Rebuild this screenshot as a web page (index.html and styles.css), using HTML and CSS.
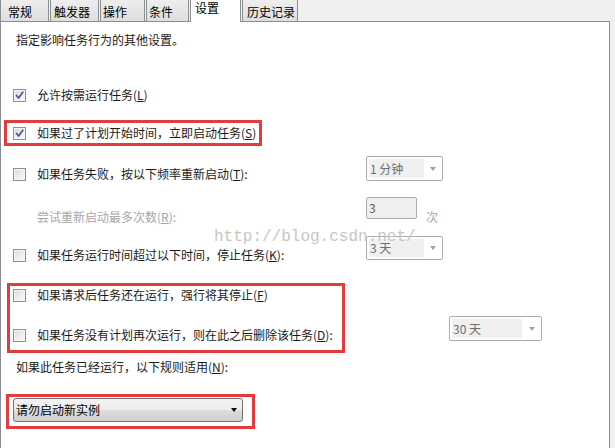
FILE: index.html
```html
<!DOCTYPE html>
<html lang="zh-CN">
<head>
<meta charset="utf-8">
<title>设置</title>
<link rel="stylesheet" href="styles.css">
</head>
<body>
<div class="tabs">
  <div class="tab t1">常规</div>
  <div class="tab t2">触发器</div>
  <div class="tab t3">操作</div>
  <div class="tab t4">条件</div>
  <div class="tab t5 active">设置</div>
  <div class="tab t6">历史记录</div>
</div>
<div class="panel">
  <p class="desc">指定影响任务行为的其他设置。</p>

  <div class="row r1">
    <span class="cb checked"><svg viewBox="0 0 11 11" width="11" height="11"><path d="M2.5 5.5 L4.6 8 L8.8 2.2" fill="none" stroke="#4a5d95" stroke-width="1.8" stroke-linecap="round" stroke-linejoin="round"/></svg></span>
    <span class="lbl">允许按需运行任务(<u>L</u>)</span>
  </div>

  <div class="row r2">
    <span class="cb checked"><svg viewBox="0 0 11 11" width="11" height="11"><path d="M2.5 5.5 L4.6 8 L8.8 2.2" fill="none" stroke="#4a5d95" stroke-width="1.8" stroke-linecap="round" stroke-linejoin="round"/></svg></span>
    <span class="lbl">如果过了计划开始时间，立即启动任务(<u>S</u>)</span>
  </div>

  <div class="ctl-row r3">
    <div class="opt mt10"><span class="cb"></span><span class="lbl">如果任务失败，按以下频率重新启动(<u>T</u>):</div>
    <div class="combo c77 h25"><span class="val v55">1 分钟</span><span class="arr"></span></div>
  </div>

  <div class="ctl-row r3b">
    <div class="opt sub mt12">尝试重新启动最多次数(<u>R</u>):</div>
    <div class="field">3</div>
    <span class="unit">次</span>
  </div>

  <div class="ctl-row r4">
    <div class="opt mt11"><span class="cb"></span><span class="lbl">如果任务运行时间超过以下时间，停止任务(<u>K</u>):</span></div>
    <div class="combo c77 h24"><span class="val v55">3 天</span><span class="arr"></span></div>
  </div>

  <div class="row r5">
    <span class="cb"></span>
    <span class="lbl">如果请求后任务还在运行，强行将其停止(<u>F</u>)</span>
  </div>

  <div class="ctl-row r6">
    <div class="opt wide mt11"><span class="cb"></span><span class="lbl">如果任务没有计划再次运行，则在此之后删除该任务(<u>D</u>):</span></div>
    <div class="combo c93 h25"><span class="val v70">30 天</span><span class="arr"></span></div>
  </div>

  <p class="rule">如果此任务已经运行，以下规则适用(<u>N</u>):</p>

  <div class="select"><span class="sel-text">请勿启动新实例</span><span class="sel-arr"></span></div>
</div>

<div class="mark m1"></div>
<div class="mark m2"></div>
<div class="mark m3"></div>
<div class="watermark">http://blog.csdn.net/</div>
</body>
</html>
```

FILE: styles.css
```css
html, body {
  margin: 0;
  padding: 0;
}
body {
  width: 615px;
  height: 448px;
  overflow: hidden;
  background: #f0f0f0;
  font-family: "Noto Sans CJK SC", "Microsoft YaHei", sans-serif;
  font-size: 12px;
  line-height: 16px;
  color: #1a1a1a;
  position: relative;
}
u { text-decoration: underline; text-underline-offset: 1px; }

/* tabs */
.tabs {
  display: flex;
  align-items: flex-start;
  gap: 1px;
  height: 21px;
}
.tab {
  box-sizing: border-box;
  height: 21px;
  padding-top: 4px;
  border: 1px solid #8c8e94;
  border-top: none;
  border-bottom: none;
  background: linear-gradient(#eeeeee, #dedede);
  color: #000;
  white-space: nowrap;
}
.t1 { width: 49px; padding-left: 7px; }
.t2 { width: 49px; padding-left: 3px; }
.t3 { width: 45px; padding-left: 2px; }
.t4 { width: 43px; padding-left: 2px; }
.t5 { width: 51px; padding-left: 4px; }
.t6 { width: 56px; padding-left: 4px; }
.tab.active {
  height: 22px;
  margin-bottom: -1px;
  padding-top: 0;
  background: #ffffff;
  position: relative;
  z-index: 1;
}

/* panel */
.panel {
  box-sizing: border-box;
  width: 610px;
  height: 440px;
  border: 1px solid #898c95;
  background: #ffffff;
}
.desc, .rule {
  margin: 0;
  padding-left: 15px;
  height: 16px;
}
.desc { margin-top: 10px; }
.rule { margin-top: 18px; }

.row {
  display: flex;
  align-items: center;
  height: 16px;
  padding-left: 12px;
}
.r1 { margin-top: 39px; }
.r2 { margin-top: 22px; }
.r5 { margin-top: 27px; }

.ctl-row {
  display: flex;
  align-items: flex-start;
}
.r3 { margin-top: 15px; height: 25px; }
.r3b { margin-top: 16px; height: 22px; }
.r4 { margin-top: 17px; height: 24px; }
.r6 { margin-top: 13px; height: 25px; }

.opt {
  box-sizing: border-box;
  width: 365px;
  height: 16px;
  padding-left: 12px;
  display: flex;
  align-items: center;
  white-space: nowrap;
}
.opt.wide { width: 448px; }
.opt.sub { padding-left: 36px; color: #a6a6a6; }
.mt10 { margin-top: 10px; }
.mt11 { margin-top: 11px; }
.mt12 { margin-top: 12px; }

.lbl { margin-left: 11px; white-space: nowrap; }

/* checkbox */
.cb {
  box-sizing: border-box;
  flex: none;
  width: 13px;
  height: 13px;
  border: 1px solid #8e8f8f;
  background: linear-gradient(135deg, #d9d9d9 0%, #eeeeee 55%, #fbfbfb 100%);
  box-shadow: inset 0 0 0 1px #f6f6f6;
  display: flex;
  align-items: center;
  justify-content: center;
}
.cb svg { display: block; }

/* combo boxes (disabled look) */
.combo {
  box-sizing: border-box;
  flex: none;
  display: flex;
  align-items: stretch;
  padding: 2px;
  border: 1px solid #acacac;
  border-radius: 2px;
  background: #ffffff;
  color: #6d6d6d;
}
.c77 { width: 77px; }
.c93 { width: 93px; }
.h24 { height: 24px; }
.h25 { height: 25px; }
.val {
  box-sizing: border-box;
  background: #f0f0f0;
  padding-left: 1px;
  display: flex;
  align-items: center;
  white-space: nowrap;
}
.v55 { width: 55px; }
.v70 { width: 70px; }
.arr {
  flex: 1;
  display: flex;
  align-items: center;
  justify-content: center;
}
.arr::before {
  content: "";
  border-left: 3.5px solid transparent;
  border-right: 3.5px solid transparent;
  border-top: 4px solid #a2a2a2;
  margin-left: 2px;
}

.field {
  box-sizing: border-box;
  flex: none;
  width: 51px;
  height: 22px;
  border: 1px solid #acacac;
  border-radius: 2px;
  background: #f0f0f0;
  color: #5a5a5a;
  padding-left: 2px;
  display: flex;
  align-items: center;
}
.unit {
  margin-left: 9px;
  margin-top: 12px;
  color: #a6a6a6;
}

/* bottom select */
.select {
  box-sizing: border-box;
  width: 230px;
  height: 24px;
  margin: 23px 0 0 12px;
  border: 1px solid #707070;
  border-radius: 3px;
  background: linear-gradient(#f3f3f3 0%, #ebebeb 50%, #dddddd 51%, #cfcfcf 100%);
  display: flex;
  align-items: center;
  padding-left: 2px;
  color: #000;
}
.sel-text { flex: 1; }
.sel-arr {
  width: 0;
  height: 0;
  border-left: 3.5px solid transparent;
  border-right: 3.5px solid transparent;
  border-top: 4px solid #000;
  margin-right: 5px;
}

/* annotation boxes drawn over the dialog */
.mark {
  position: absolute;
  box-sizing: border-box;
  border: 3px solid #e23c3e;
}
.m1 { left: 4px; top: 120px; width: 258px; height: 26px; }
.m2 { left: 7px; top: 283px; width: 338px; height: 70px; }
.m3 { left: 6px; top: 394px; width: 249px; height: 35px; }

.watermark {
  position: absolute;
  left: 214px;
  top: 227px;
  font-family: "Liberation Mono", monospace;
  font-size: 16px;
  line-height: 20px;
  color: #c6c6c6;
  white-space: nowrap;
}
```
